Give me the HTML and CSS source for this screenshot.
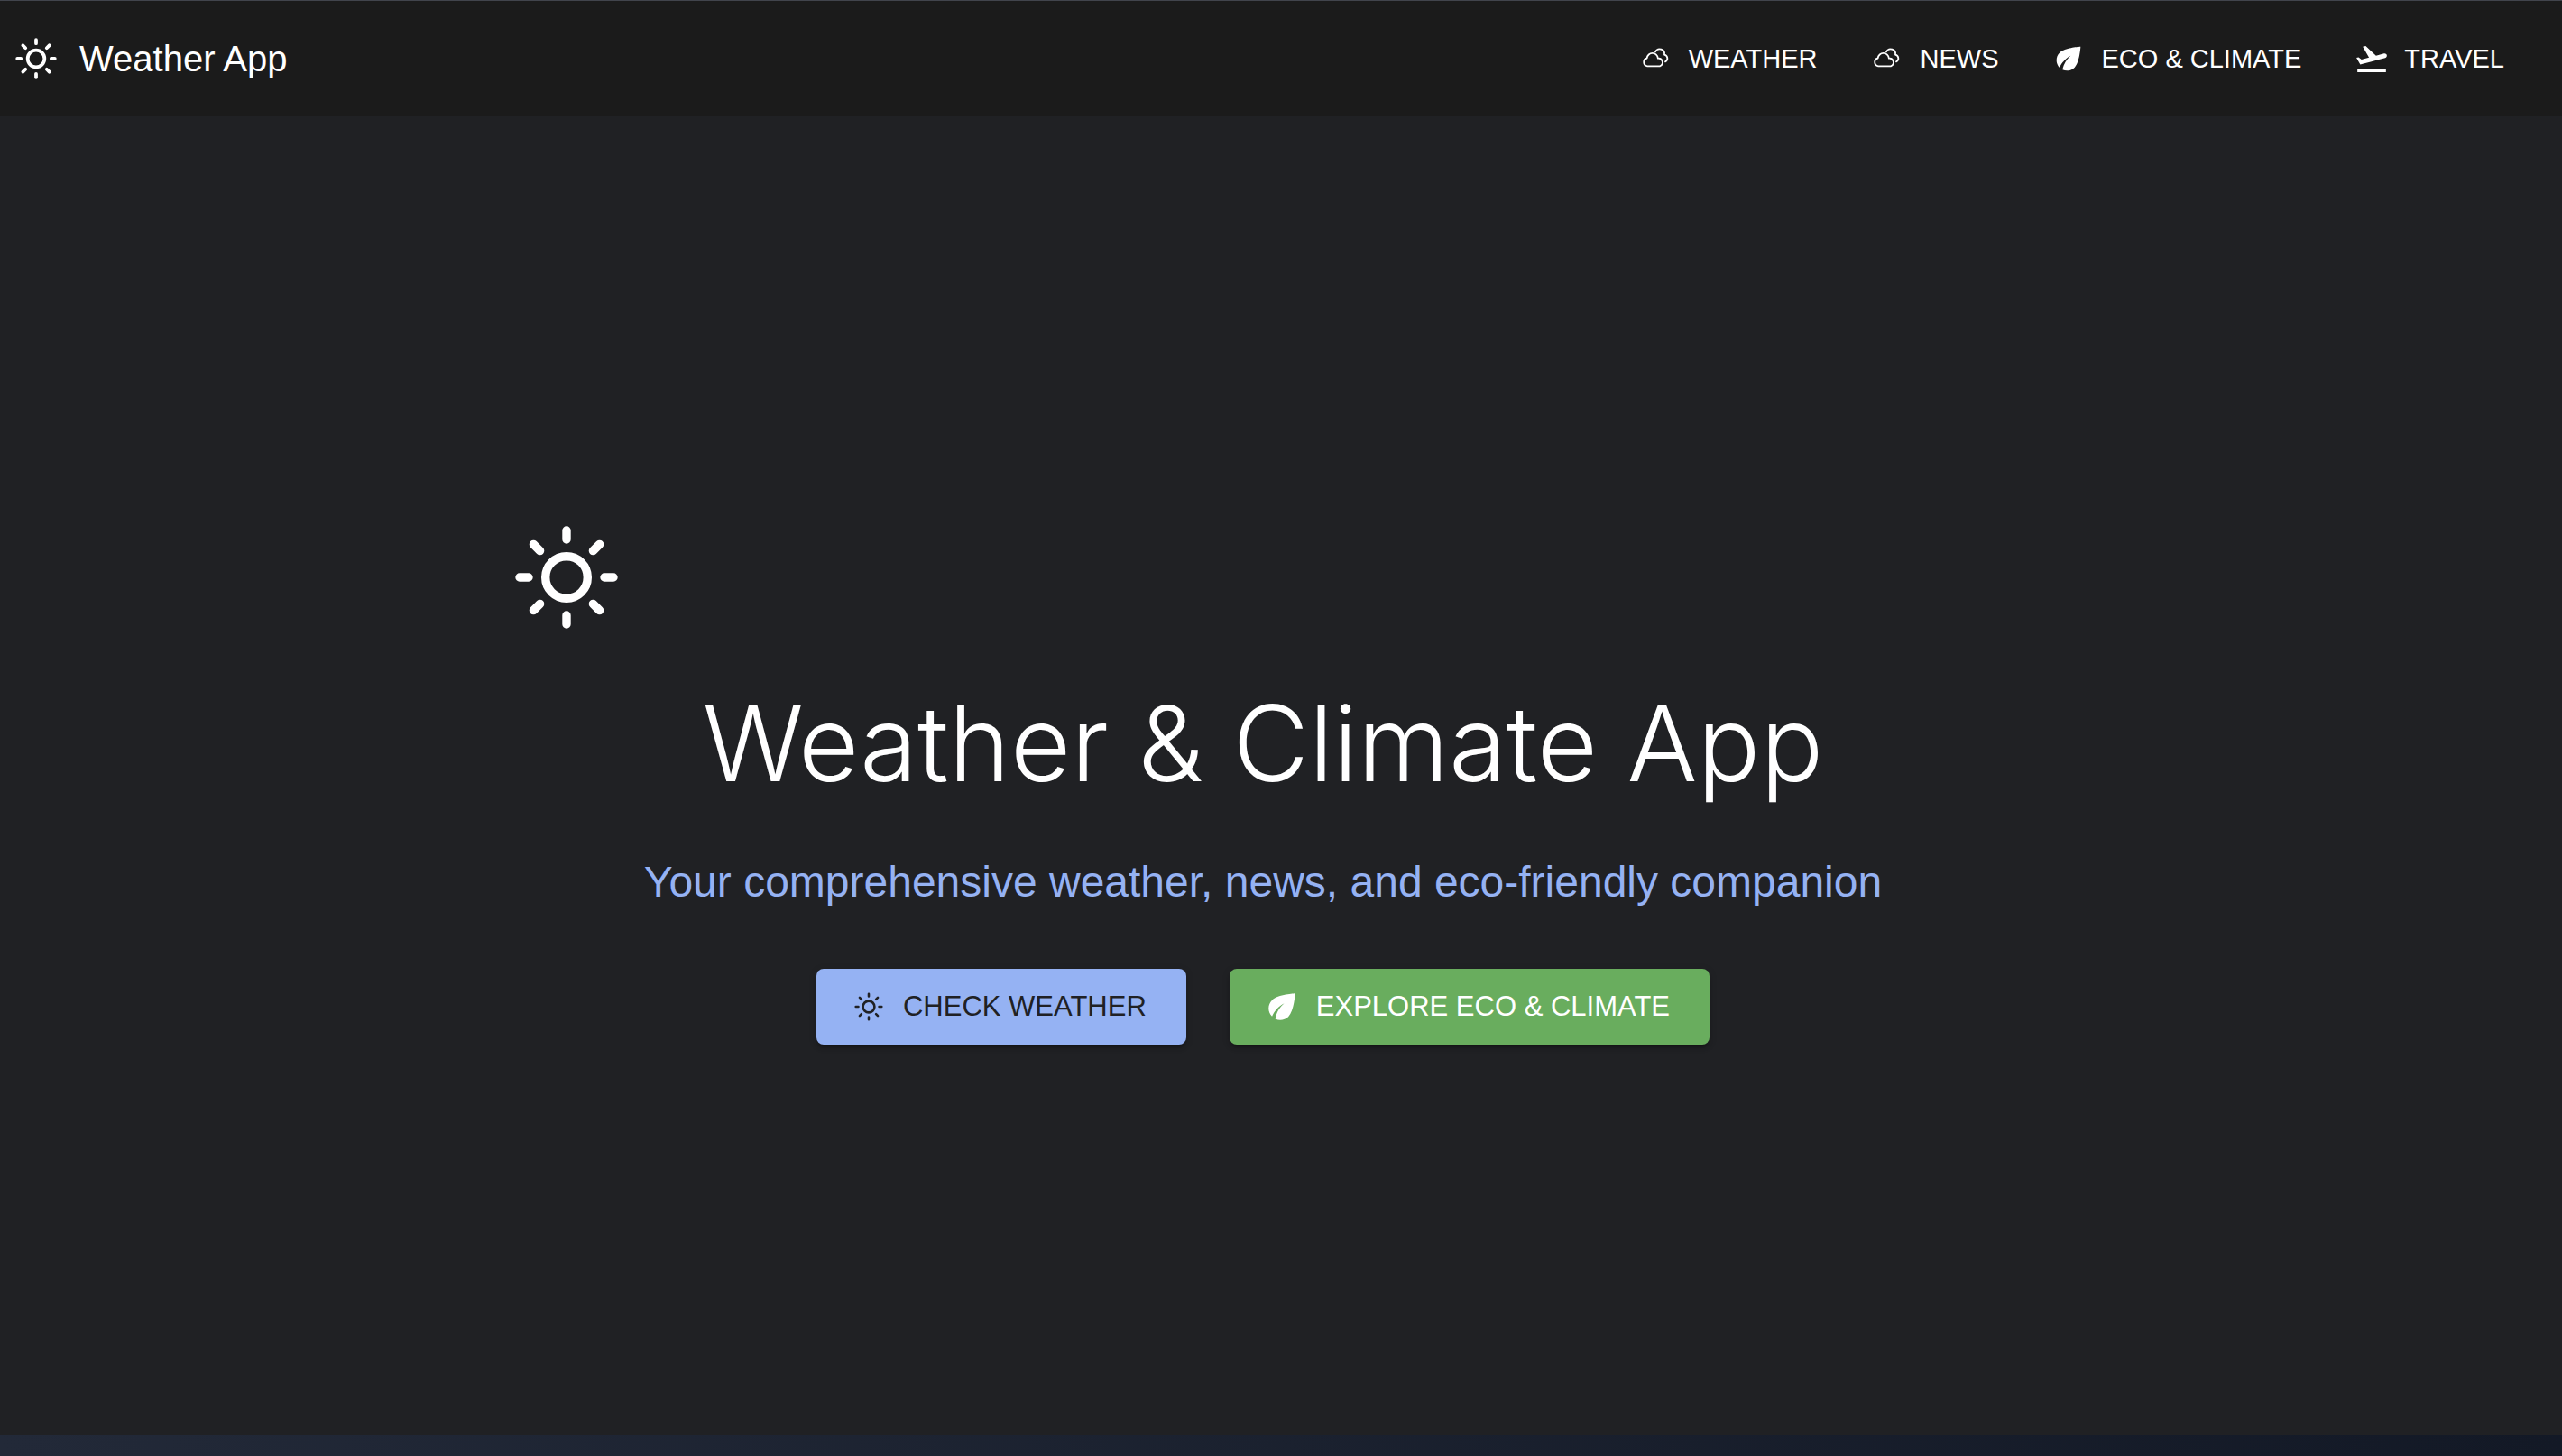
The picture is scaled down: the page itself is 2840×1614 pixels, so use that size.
FILE: index.html
```html
<!DOCTYPE html>
<html lang="en">
<head>
<meta charset="utf-8">
<title>Weather App</title>
<link rel="stylesheet" href="styles.css">
</head>
<body>
<svg class="sprite" aria-hidden="true">
  <symbol id="sun" viewBox="-80 -80 160 160">
    <g fill="none" stroke="currentColor" stroke-width="9.4" stroke-linecap="round">
      <circle r="23.3"/>
      <path d="M0-42V-52M0 42V52M-42 0H-52M42 0H52M29.4-29.4 36.6-36.6M29.4 29.4 36.6 36.6M-29.4-29.4-36.6-36.6M-29.4 29.4-36.6 36.6"/>
    </g>
  </symbol>
  <symbol id="cloud" viewBox="0 0 120 120">
    <path fill="none" stroke="currentColor" stroke-width="5.4" stroke-linecap="round" stroke-linejoin="round" d="M30 85A13.5 13.5 0 0 1 29 58.500A18.300 18.300 0 0 1 65.500 59A13.500 13.500 0 0 1 72 85ZM57 37A16 16 0 0 1 87 47A12.200 12.200 0 0 1 90 70"/>
  </symbol>
  <symbol id="leaf" viewBox="0 0 24 24">
    <path fill="currentColor" d="M6.050 8.050c-2.730 2.730-2.730 7.150-.02 9.880 1.470-3.400 4.090-6.240 7.360-7.930-2.770 2.340-4.710 5.610-5.390 9.320 2.600 1.230 5.800.78 7.950-1.370C19.430 14.470 20 4 20 4S9.530 4.570 6.050 8.050z"/>
  </symbol>
  <symbol id="plane" viewBox="0 0 24 24">
    <path fill="currentColor" d="M2.500 19h19v2h-19zm19.570-9.360c-.21-.8-1.040-1.280-1.840-1.060L14.920 10l-6.900-6.430-1.930.51 4.140 7.170-4.970 1.330-1.970-1.540-1.450.39 1.820 3.160.77 1.330 1.600-.43 5.310-1.420 4.350-1.160L21 11.490c.81-.23 1.280-1.050 1.070-1.850z"/>
  </symbol>
</svg>

<header class="topbar">
  <a class="brand" href="#"><svg class="brand-icon"><use href="#sun"/></svg>Weather App</a>
  <nav class="nav">
    <a class="nav-link" href="#weather"><svg class="nav-icon"><use href="#cloud"/></svg>WEATHER</a>
    <a class="nav-link" href="#news"><svg class="nav-icon"><use href="#cloud"/></svg>NEWS</a>
    <a class="nav-link" href="#eco"><svg class="nav-icon"><use href="#leaf"/></svg>ECO &amp; CLIMATE</a>
    <a class="nav-link" href="#travel"><svg class="nav-icon"><use href="#plane"/></svg>TRAVEL</a>
  </nav>
</header>

<main class="hero">
  <div class="hero-content">
    <svg class="hero-icon"><use href="#sun"/></svg>
    <h1 class="hero-title">Weather &amp; Climate App</h1>
    <p class="hero-subtitle">Your comprehensive weather, news, and eco-friendly companion</p>
    <div class="actions">
      <button class="button button-weather" type="button"><svg class="button-icon"><use href="#sun"/></svg>CHECK WEATHER</button>
      <button class="button button-eco" type="button"><svg class="button-icon"><use href="#leaf"/></svg>EXPLORE ECO &amp; CLIMATE</button>
    </div>
  </div>
</main>
<div class="next-section"></div>
</body>
</html>
```

FILE: styles.css
```css
* {
  box-sizing: border-box;
}

body {
  display: flex;
  flex-direction: column;
  min-height: 100vh;
  margin: 0;
  background: #202124;
  color: #fff;
  font-family: "Liberation Sans", Arial, sans-serif;
}

.sprite {
  position: absolute;
  width: 0;
  height: 0;
}

.topbar {
  display: flex;
  align-items: center;
  justify-content: space-between;
  height: 129px;
  padding: 0 64px 0 8px;
  border-top: 1px solid #41444c;
  background: #1b1b1b;
}

.brand {
  display: flex;
  align-items: center;
  gap: 16px;
  color: inherit;
  font-size: 40px;
  line-height: 64px;
  text-decoration: none;
}

.brand-icon {
  width: 64px;
  height: 64px;
}

.nav {
  display: flex;
  gap: 58px;
}

.nav-link {
  display: flex;
  align-items: center;
  gap: 16px;
  color: inherit;
  font-size: 29px;
  line-height: 48px;
  text-decoration: none;
}

.nav-icon {
  width: 40px;
  height: 40px;
}

.hero {
  display: flex;
  flex: 1;
  align-items: center;
  justify-content: center;
  padding: 0 40px 2px 0;
}

.hero-content {
  width: 100%;
  max-width: 1704px;
  text-align: center;
}

.hero-icon {
  display: block;
  width: 160px;
  height: 160px;
}

.hero-title {
  margin: 34px 0 52px;
  font-family: Inter, "Liberation Sans", sans-serif;
  font-size: 116px;
  font-weight: 300;
  line-height: 140px;
}

.hero-subtitle {
  margin: 0 0 64px;
  color: #95b2f3;
  font-size: 48px;
  line-height: 64px;
}

.actions {
  display: flex;
  justify-content: center;
  gap: 48px;
}

.button {
  display: flex;
  align-items: center;
  gap: 16px;
  height: 84px;
  padding: 0 44px 0 36px;
  border: 0;
  border-radius: 8px;
  box-shadow: 0 6px 2px -4px rgba(0, 0, 0, 0.2), 0 4px 4px rgba(0, 0, 0, 0.14), 0 2px 10px rgba(0, 0, 0, 0.12);
  font: inherit;
  font-size: 31px;
}

.button-icon {
  width: 44px;
  height: 44px;
}

.button-weather {
  background: #95b2f3;
  color: #202124;
}

.button-eco {
  background: #69ad5e;
  color: #fff;
}

.next-section {
  height: 23px;
  background: linear-gradient(90deg, #222938, #131926);
}
```
